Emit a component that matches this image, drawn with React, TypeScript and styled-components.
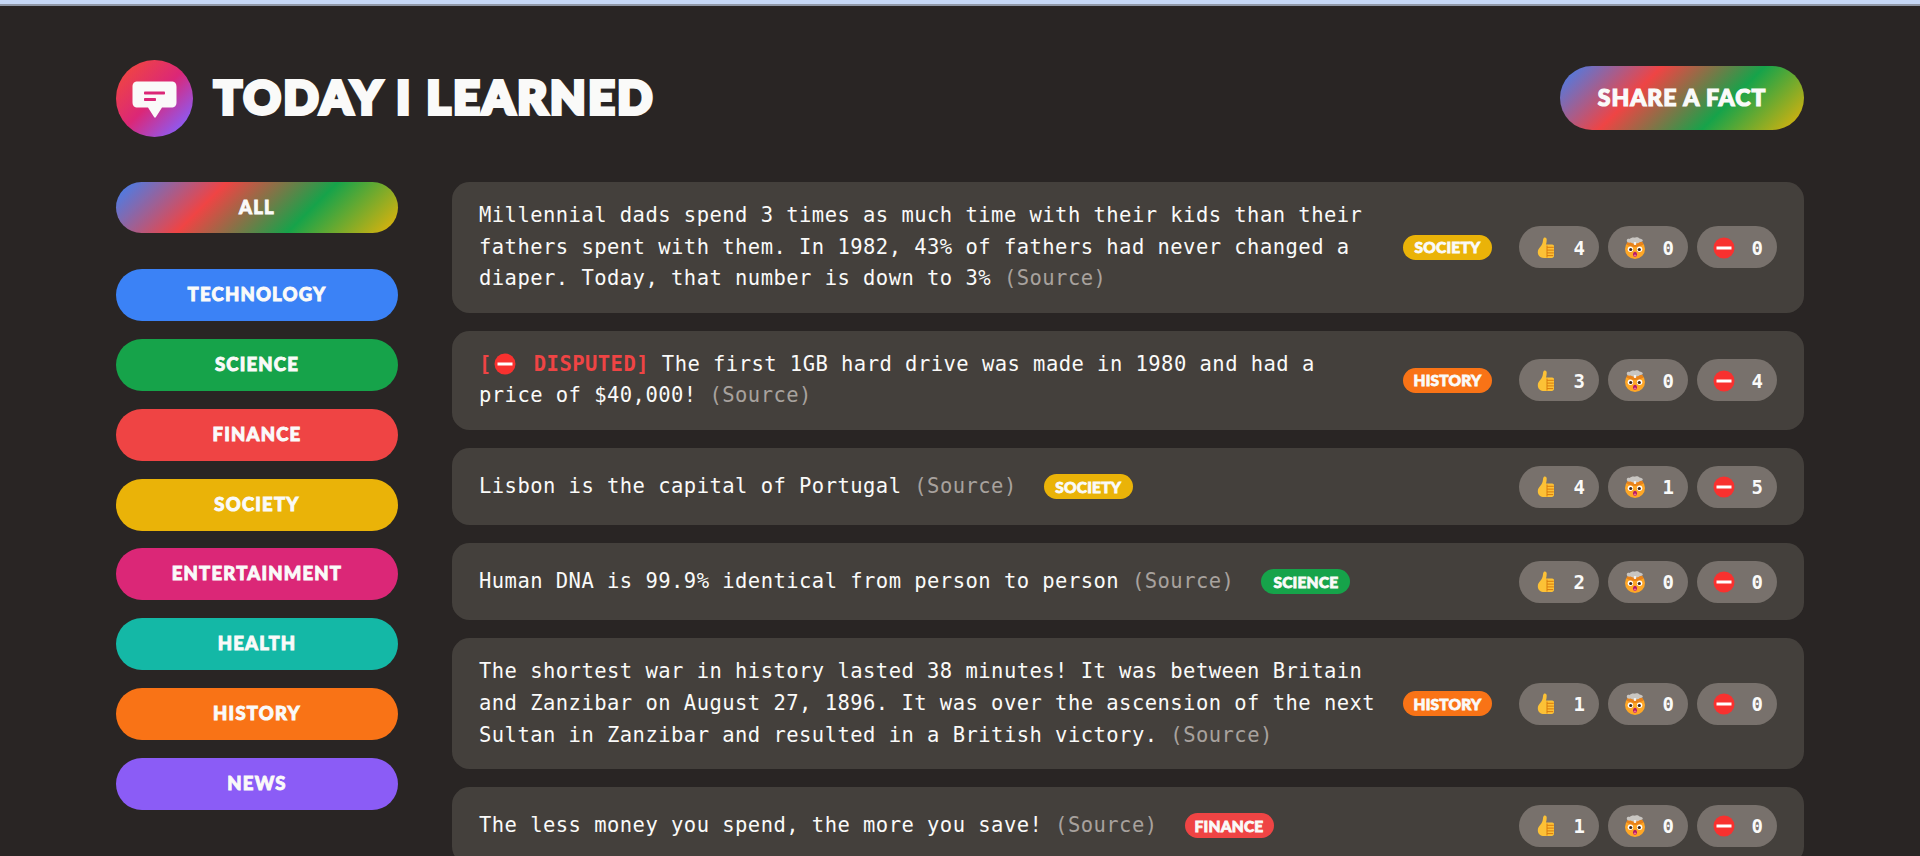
import styled, { createGlobalStyle } from 'styled-components'

const CATEGORIES = [
  { name: 'technology', color: '#3b82f6' },
  { name: 'science', color: '#16a34a' },
  { name: 'finance', color: '#ef4444' },
  { name: 'society', color: '#eab308' },
  { name: 'entertainment', color: '#db2777' },
  { name: 'health', color: '#14b8a6' },
  { name: 'history', color: '#f97316' },
  { name: 'news', color: '#8b5cf6' },
]

const colorOf = (name: string) =>
  CATEGORIES.find(cat => cat.name === name)?.color ?? '#78716c'

type Fact = {
  text: string
  category: string
  votes: [number, number, number]
  disputed?: boolean
}

const FACTS: Fact[] = [
  {
    text: 'Millennial dads spend 3 times as much time with their kids than their fathers spent with them. In 1982, 43% of fathers had never changed a diaper. Today, that number is down to 3%',
    category: 'society',
    votes: [4, 0, 0],
  },
  {
    text: 'The first 1GB hard drive was made in 1980 and had a price of $40,000!',
    category: 'history',
    votes: [3, 0, 4],
    disputed: true,
  },
  {
    text: 'Lisbon is the capital of Portugal',
    category: 'society',
    votes: [4, 1, 5],
  },
  {
    text: 'Human DNA is 99.9% identical from person to person',
    category: 'science',
    votes: [2, 0, 0],
  },
  {
    text: 'The shortest war in history lasted 38 minutes! It was between Britain and Zanzibar on August 27, 1896. It was over the ascension of the next Sultan in Zanzibar and resulted in a British victory.',
    category: 'history',
    votes: [1, 0, 0],
  },
  {
    text: 'The less money you spend, the more you save!',
    category: 'finance',
    votes: [1, 0, 0],
  },
]

function LogoIcon() {
  return (
    <LogoSvg viewBox="0 0 77 77">
      <defs>
        <linearGradient id="logoFill" x1="0.12" y1="0.12" x2="0.88" y2="0.88">
          <stop offset="0" stopColor="#ef4444" />
          <stop offset="0.5" stopColor="#db2777" />
          <stop offset="1" stopColor="#8b5cf6" />
        </linearGradient>
      </defs>
      <circle cx="38.5" cy="38.5" r="38.5" fill="url(#logoFill)" />
      <path
        d="M22 21.500h33c4 0 5.500 1.800 5.500 5.500v15c0 3.700-1.500 5.500-5.500 5.500h-9l-6.200 9.800-.8.500-.8-.5-6.200-9.800H22c-4 0-5.500-1.800-5.500-5.500V27c0-3.700 1.500-5.500 5.500-5.500z"
        fill="#fafaf9"
      />
      <rect x="28" y="31.500" width="21" height="3" rx="0.8" fill="#db2777" />
      <rect x="28" y="38" width="12" height="3" rx="0.8" fill="#db2777" />
    </LogoSvg>
  )
}

function ThumbsUp() {
  return (
    <EmojiSvg viewBox="0 0 22 22">
      <path
        d="M9.500.6c1.500-.3 2.200.8 2.200 2.200 0 1.800-.3 3.400-.7 4.600h6.200c1.100 0 1.800.8 1.800 1.800v9.600c0 1.300-.9 2.200-2.200 2.200H9.300C5.400 21 2.800 18.800 2.800 15.200c0-2.500 1.100-4 2.600-5.500C6.800 8.200 7.800 6.200 8 3.300 8.100 1.900 8.700.8 9.500.6z"
        fill="#fcc136"
      />
      <path
        d="M12 10.300h6.800M12 13.100h6.800M12 15.900h6.800M12 18.600h6.200M12 8.500v12"
        stroke="#d97b0d"
        strokeWidth="1"
        fill="none"
      />
    </EmojiSvg>
  )
}

function MindBlown() {
  return (
    <EmojiSvg viewBox="0 0 22 22">
      <circle cx="11" cy="12" r="10" fill="#ffa726" />
      <path d="M2.300 7.500 Q11 12.500 19.700 7.500 L18 4.500 H4z" fill="#e8821a" />
      <path
        d="M2.800 3.200C3 1.800 4.800 1.500 5.800 2c1.200-1.700 3.700-1.900 5.200-1.200 1.700-.9 4-.3 4.700 1 1.300 0 3.200.5 3.100 1.800-.1 1.300-1.800 1.500-2.900 1.300-1 1.300-3 1.600-4.400 1-1.500.8-3.800.7-5-.3-1.600.4-4-.1-3.700-2.400z"
        fill="#c9c6c2"
      />
      <rect x="9.800" y="5" width="2.400" height="3" rx="0.800" fill="#f5f3f0" />
      <circle cx="6.400" cy="12.300" r="2.700" fill="#fff" />
      <circle cx="15.600" cy="12.300" r="2.700" fill="#fff" />
      <circle cx="6.700" cy="12.500" r="1.600" fill="#40261a" />
      <circle cx="15.300" cy="12.500" r="1.600" fill="#40261a" />
      <ellipse cx="11" cy="17.300" rx="2" ry="2.600" fill="#b0186c" />
      <ellipse cx="11" cy="18.500" rx="1.300" ry="1.100" fill="#f46c8f" />
    </EmojiSvg>
  )
}

function NoEntry({ inline }: { inline?: boolean }) {
  const Svg = inline ? InlineEmojiSvg : EmojiSvg
  return (
    <Svg viewBox="0 0 22 22">
      <circle cx="11" cy="11" r="10.500" fill="#f8312f" />
      <rect x="3.500" y="9.500" width="15" height="3" fill="#fff" />
    </Svg>
  )
}

function FactCard({ fact }: { fact: Fact }) {
  const [up, mind, down] = fact.votes
  return (
    <Card>
      <FactText>
        {fact.disputed && (
          <>
            <Disputed>
              [<NoEntry inline />
              DISPUTED]
            </Disputed>{' '}
          </>
        )}
        {fact.text} <Source href="#">(Source)</Source>
      </FactText>
      <Tag $color={colorOf(fact.category)}>{fact.category}</Tag>
      <Votes>
        <VoteButton>
          <ThumbsUp />
          {up}
        </VoteButton>
        <VoteButton>
          <MindBlown />
          {mind}
        </VoteButton>
        <VoteButton>
          <NoEntry />
          {down}
        </VoteButton>
      </Votes>
    </Card>
  )
}

export default function App() {
  return (
    <>
      <GlobalStyle />
      <TopStrip />
      <Page>
        <Header>
          <Logo>
            <LogoIcon />
            <Title>Today I Learned</Title>
          </Logo>
          <ShareButton>Share a fact</ShareButton>
        </Header>
        <Layout>
          <Sidebar>
            <AllItem>
              <AllButton>All</AllButton>
            </AllItem>
            {CATEGORIES.map(cat => (
              <li key={cat.name}>
                <CategoryButton $color={cat.color}>{cat.name}</CategoryButton>
              </li>
            ))}
          </Sidebar>
          <Facts>
            {FACTS.map(fact => (
              <FactCard key={fact.text} fact={fact} />
            ))}
          </Facts>
        </Layout>
      </Page>
    </>
  )
}

const headingFont = `'Lato', 'Liberation Sans', sans-serif`
const bodyFont = `'DejaVu Sans Mono', 'Liberation Mono', monospace`
const rainbow = 'linear-gradient(135deg, #3b82f6, #ef4444, #16a34a, #eab308)'

const GlobalStyle = createGlobalStyle`
  * {
    margin: 0;
    padding: 0;
    box-sizing: border-box;
  }

  html, body {
    height: 100%;
    overflow: hidden;
    background: #292524;
  }

  body {
    color: #fafaf9;
    font-family: ${bodyFont};
  }
`

const TopStrip = styled.div`
  height: 6px;
  background: #c6d8f6;
  border-bottom: 2px solid #8f97a6;
`

const Page = styled.div`
  padding: 54px 116px 0;
`

const Header = styled.header`
  display: flex;
  align-items: center;
  justify-content: space-between;
  height: 77px;
  margin-bottom: 45px;
`

const Logo = styled.div`
  display: flex;
  align-items: center;
  gap: 21px;
`

const LogoSvg = styled.svg`
  width: 77px;
  height: 77px;
  display: block;
`

const Title = styled.h1`
  font-family: ${headingFont};
  font-size: 46px;
  font-weight: 900;
  line-height: 1;
  letter-spacing: 2.700px;
  text-transform: uppercase;
  -webkit-text-stroke: 4px #fafaf9;
  margin-top: -3px;
`

const ShareButton = styled.button`
  width: 244px;
  height: 64px;
  margin-bottom: 1px;
  padding-bottom: 2px;
  border: none;
  border-radius: 100px;
  background-image: ${rainbow};
  color: #fafaf9;
  font-family: ${headingFont};
  font-size: 23px;
  font-weight: 900;
  letter-spacing: 1px;
  text-transform: uppercase;
  -webkit-text-stroke: 1.200px #fafaf9;
`

const Layout = styled.main`
  display: grid;
  grid-template-columns: 282px 1fr;
  gap: 54px;
  align-items: start;
`

const Sidebar = styled.ul`
  list-style: none;
  display: flex;
  flex-direction: column;
  gap: 17.860px;
`

const AllItem = styled.li`
  margin-bottom: 18.140px;
`

const CategoryButton = styled.button<{ $color: string }>`
  display: block;
  width: 100%;
  height: 52px;
  padding-bottom: 2px;
  border: none;
  border-radius: 100px;
  background: ${props => props.$color};
  color: #fafaf9;
  font-family: ${headingFont};
  font-size: 18.500px;
  font-weight: 900;
  letter-spacing: 1.200px;
  text-transform: uppercase;
  -webkit-text-stroke: 0.900px #fafaf9;
`

const AllButton = styled(CategoryButton).attrs({ $color: 'transparent' })`
  height: 51px;
  background-image: ${rainbow};
`

const Facts = styled.section`
  display: flex;
  flex-direction: column;
  gap: 18px;
`

const Card = styled.article`
  display: flex;
  align-items: center;
  gap: 27px;
  padding: 17.600px 27px;
  border-radius: 17.600px;
  background: #44403c;
`

const FactText = styled.p`
  font-size: 20.500px;
  line-height: 31.900px;
  letter-spacing: 0.460px;
  color: #fafaf9;
`

const Disputed = styled.span`
  color: #ef4444;
  font-weight: 700;
`

const Source = styled.a`
  color: #a8a29e;
  text-decoration: none;
`

const Tag = styled.span<{ $color: string }>`
  flex-shrink: 0;
  width: 89px;
  height: 25px;
  display: flex;
  align-items: center;
  justify-content: center;
  border-radius: 100px;
  background: ${props => props.$color};
  color: #fafaf9;
  font-family: ${headingFont};
  font-size: 15.500px;
  font-weight: 900;
  letter-spacing: 0.200px;
  text-transform: uppercase;
  -webkit-text-stroke: 0.800px #fafaf9;
`

const Votes = styled.div`
  display: flex;
  gap: 9px;
  margin-left: auto;
  flex-shrink: 0;
`

const VoteButton = styled.button`
  width: 80px;
  height: 42px;
  display: flex;
  align-items: center;
  justify-content: space-between;
  padding: 1px 14px 0 16px;
  border: none;
  border-radius: 100px;
  background: #78716c;
  color: #fafaf9;
  font-family: ${bodyFont};
  font-size: 19px;
  font-weight: 700;
`

const EmojiSvg = styled.svg`
  width: 22px;
  height: 22px;
  display: block;
`

const InlineEmojiSvg = styled.svg`
  width: 22px;
  height: 22px;
  vertical-align: -4px;
  margin: 0 18px 0 2px;
`
